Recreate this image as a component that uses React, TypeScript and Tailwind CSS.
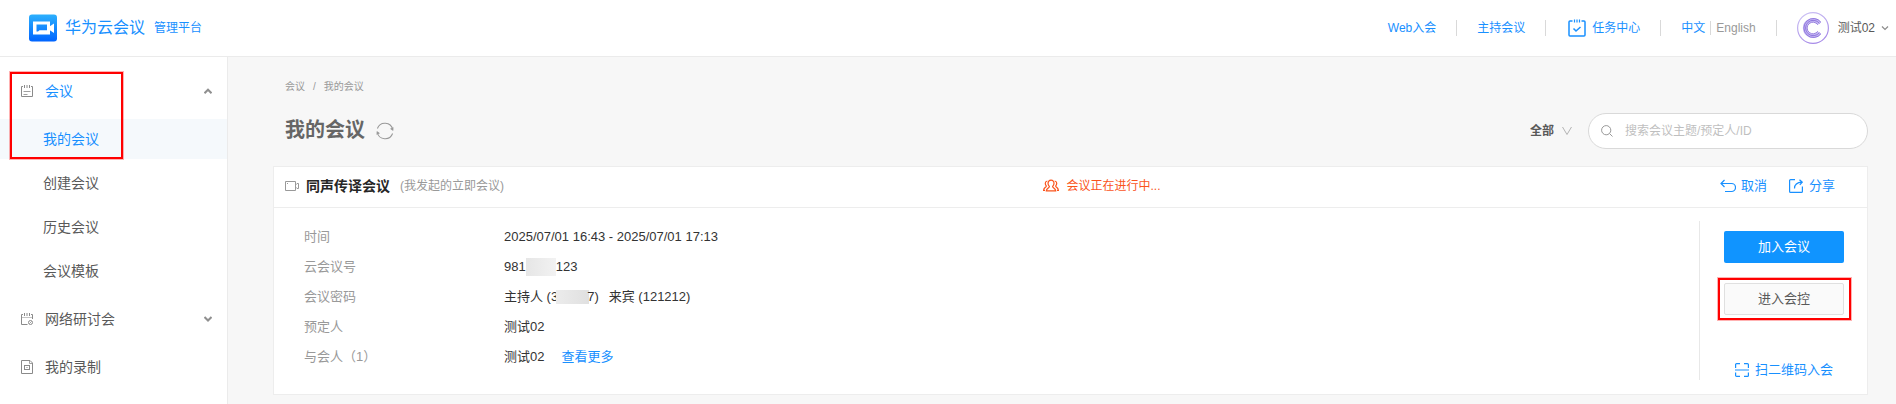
import { useState } from "react";
import type { ReactNode } from "react";

const subItems = ["我的会议", "创建会议", "历史会议", "会议模板"];

function Divider() {
  return <span className="mx-5 h-4 w-px bg-[#d9d9d9]" />;
}

function Chevron({ up = false }: { up?: boolean }) {
  return (
    <svg className="h-2 w-2 shrink-0" viewBox="0 0 8 8" fill="none" stroke="#8f8f8f" strokeWidth="2">
      <path d={up ? "M0.5 6.2 4 2.7 7.5 6.2" : "M0.5 2 4 5.5 7.5 2"} />
    </svg>
  );
}

function LogoIcon() {
  return (
    <svg className="h-7 w-7" viewBox="0 0 28 28">
      <defs>
        <linearGradient id="logo" x1="0" y1="0" x2="0" y2="1">
          <stop offset="0" stopColor="#2cb0fd" />
          <stop offset="1" stopColor="#0064ff" />
        </linearGradient>
      </defs>
      <rect y="0.5" width="28" height="27" rx="3" fill="url(#logo)" />
      <path d="M4 7.500h17v13H4zM7.500 10.500v7h1.500l1.500-1.200h7.500v-5.800z" fill="#fff" fillRule="evenodd" />
      <path d="M20.500 12.500 25 9.500v9.500l-4.500-3z" fill="#fff" />
    </svg>
  );
}

function CalendarIcon() {
  return (
    <svg className="h-3 w-3 shrink-0" viewBox="0 0 12 12" fill="none" stroke="#8a8a8a">
      <path d="M2 1.500H.5v10h11v-10H10M3.500 0v3M6 0v3M8.500 0v3" />
      <path d="M2.500 6.500h7M2.500 9.500h4" stroke="#a0a0a0" />
    </svg>
  );
}

function WebinarIcon() {
  return (
    <svg className="h-3 w-3 shrink-0" viewBox="0 0 12 12" fill="none" stroke="#8a8a8a">
      <path d="M6.500 11.500h-6v-10H2M10 1.500h1.500V6M3.500 0v3M6 0v3M8.500 0v3" />
      <path d="M1 4.500h10" stroke="#c4c4c4" />
      <circle cx="9.500" cy="9.500" r="2" />
      <path d="m8.500 10.500 2-2" strokeWidth="0.8" />
    </svg>
  );
}

function RecordIcon() {
  return (
    <svg className="h-3.5 w-3 shrink-0" viewBox="0 0 12 14" fill="none" stroke="#8a8a8a">
      <path d="M.5.5H9L11.500 3v10.500H.5z" />
      <path d="M8.500.5v3h3" strokeWidth="0.8" />
      <rect x="3.500" y="5.500" width="5" height="4" />
      <path d="M5.500 7.500h1" />
    </svg>
  );
}

function TaskIcon() {
  return (
    <svg className="h-[18px] w-[18px]" viewBox="0 0 18 18" fill="none" stroke="#1890ff" strokeWidth="1.500">
      <path d="M4.500 2H2a1 1 0 0 0-1 1v13a1 1 0 0 0 1 1h14a1 1 0 0 0 1-1V3a1 1 0 0 0-1-1h-2.500" />
      <path d="M6.500.5v3M9 .5v3M11.500.5v3" strokeWidth="1.200" />
      <path d="m5.500 9.500 2.500 2.500 4.500-4" />
    </svg>
  );
}

function Avatar() {
  return (
    <svg className="h-8 w-8" viewBox="0 0 32 32" fill="none">
      <defs>
        <linearGradient id="ring" x1="0" y1="0" x2="0.5" y2="1">
          <stop offset="0" stopColor="#cfc6f5" />
          <stop offset="1" stopColor="#a78be8" />
        </linearGradient>
      </defs>
      <circle cx="16" cy="16" r="15.400" stroke="url(#ring)" strokeWidth="1.200" />
      <path d="M22.500 11.500a8 8 0 1 0 0 9" stroke="#c5b8f3" strokeWidth="4" />
      <path d="M24 10.300a9.500 9.500 0 1 0 0 11.400M22.500 11.500a7.700 7.700 0 1 0 0 9M20.800 12.800a5.800 5.800 0 1 0 0 6.400" stroke="#8468d8" strokeWidth="0.800" />
    </svg>
  );
}

function RefreshIcon() {
  return (
    <svg className="h-[18px] w-[18px]" viewBox="0 0 18 18" fill="none" stroke="#999">
      <path d="M1.400 6.500a8 8 0 0 1 15.300 1M16.600 11.500a8 8 0 0 1-15.300-1" strokeWidth="1.100" />
      <path d="m14 6.800 3.200 2.200.3-3.800zM4 11.200.8 9l-.3 3.800z" fill="#999" stroke="none" />
    </svg>
  );
}

function CameraIcon() {
  return (
    <svg className="h-3 w-3.5 shrink-0" viewBox="0 0 14 12" fill="none" stroke="#999">
      <path d="M.5 1.500h10v9H.5zM10.500 5l1.500-1.500h1.500v5H12L10.500 7M2 3.500h1" />
    </svg>
  );
}

function PeopleIcon() {
  return (
    <svg className="h-3.5 w-4" viewBox="0 0 16 14" fill="none" stroke="#fa541c" strokeWidth="1.200">
      <path d="M8 1.200c-2 0-3 1.300-3 3.100 0 1.500.6 2.500 1.400 3.200 0 1.500-2.900 1.500-3.100 4.300h9.400c-.2-2.800-3.100-2.800-3.100-4.300.8-.7 1.400-1.700 1.400-3.200 0-1.800-1-3.100-3-3.100z" />
      <path d="M4.300 2C2.900 2.200 2.200 3.300 2.300 4.600c0 1 .4 1.700 1 2.300C3.300 8.300.8 8.400.6 11.300H2M11.700 2c1.400.2 2.100 1.300 2 2.600 0 1-.4 1.700-1 2.300 0 1.400 2.500 1.500 2.700 4.400H14" />
    </svg>
  );
}

function UndoIcon() {
  return (
    <svg className="h-3.5 w-4" viewBox="0 0 16 14" fill="none" stroke="#1890ff" strokeWidth="1.200">
      <path d="M4.500 1 1 4.500 4.500 8M1 4.500h10.500a3.700 3.700 0 0 1 0 8H5" />
    </svg>
  );
}

function ShareIcon() {
  return (
    <svg className="h-3.5 w-3.5" viewBox="0 0 14 14" fill="none" stroke="#1890ff" strokeWidth="1.200">
      <path d="M6 .6H1.600a1 1 0 0 0-1 1v10.800a1 1 0 0 0 1 1h10.800a1 1 0 0 0 1-1V7.500" />
      <path d="M5.500 9.500C5.500 6 8 3.500 13 3.200M10.500.8 13.200 3.200l-2.400 2.600" />
    </svg>
  );
}

function ScanIcon() {
  return (
    <svg className="h-3.5 w-3.5" viewBox="0 0 14 14" fill="none" stroke="#1890ff" strokeWidth="1.200">
      <path d="M5 .6H1.600a1 1 0 0 0-1 1V5M9 .6h3.400a1 1 0 0 1 1 1V5M5 13.400H1.600a1 1 0 0 1-1-1V9.500M9 13.400h3.400a1 1 0 0 0 1-1V9.500M0 7h14" />
    </svg>
  );
}

function DetailRow({ label, children }: { label: string; children: ReactNode }) {
  return (
    <div className="flex h-[30px] items-center">
      <dt className="w-[200px] shrink-0 text-[#999]">{label}</dt>
      <dd className="flex items-center whitespace-pre text-[#333]">{children}</dd>
    </div>
  );
}

function Header() {
  return (
    <header className="flex h-[57px] items-center border-b border-[#ebebeb] bg-white pr-[7px] pl-[29px] text-xs text-[#1890ff]">
      <LogoIcon />
      <span className="ml-2 text-base leading-6">华为云会议</span>
      <span className="ml-[9px]">管理平台</span>
      <nav className="ml-auto flex items-center whitespace-nowrap">
        <a href="#web">Web入会</a>
        <Divider />
        <a href="#host">主持会议</a>
        <Divider />
        <a href="#tasks" className="ml-0.5 flex items-center gap-1.5">
          <TaskIcon />
          任务中心
        </a>
        <Divider />
        <button type="button">中文</button>
        <span className="mx-[5px] h-3.5 w-px bg-[#d9d9d9]" />
        <button type="button" className="text-[#999]">
          English
        </button>
        <Divider />
        <button type="button" className="flex items-center text-[#595959]">
          <Avatar />
          <span className="mr-1.5 ml-[9px]">测试02</span>
          <svg className="h-2 w-2" viewBox="0 0 8 8" fill="none" stroke="#8c8c8c" strokeWidth="1.200">
            <path d="m1 2.500 3 3 3-3" />
          </svg>
        </button>
      </nav>
    </header>
  );
}

function Sidebar() {
  const [active, setActive] = useState(subItems[0]);

  return (
    <aside className="relative w-[228px] shrink-0 border-r border-[#ebebeb] bg-white pt-2.5 text-sm text-[#595959]">
      <button type="button" className="flex h-12 w-full items-center gap-3 pr-[15px] pl-[21px] text-[#1890ff]">
        <CalendarIcon />
        <span className="flex-1 text-left">会议</span>
        <Chevron up />
      </button>
      <ul className="flex flex-col gap-1 py-1">
        {subItems.map((item) => (
          <li key={item}>
            <button
              type="button"
              onClick={() => setActive(item)}
              className={`h-10 w-full pl-[43px] text-left ${item === active ? "bg-[#f5f9fc] text-[#1890ff]" : ""}`}
            >
              {item}
            </button>
          </li>
        ))}
      </ul>
      <button type="button" className="flex h-12 w-full items-center gap-3 pr-[15px] pl-[21px]">
        <WebinarIcon />
        <span className="flex-1 text-left">网络研讨会</span>
        <Chevron />
      </button>
      <button type="button" className="flex h-12 w-full items-center gap-3 pr-[15px] pl-[21px]">
        <RecordIcon />
        <span className="flex-1 text-left">我的录制</span>
      </button>
      <div className="pointer-events-none absolute top-[15px] left-2.5 h-[87px] w-[113px] border-2 border-[#ff0000] ring-1 ring-[#ff0000]/30" />
    </aside>
  );
}

function MeetingCard() {
  return (
    <section className="mt-[17px] border border-[#ededed] bg-white">
      <div className="flex h-[41px] items-center border-b border-[#ededed] pr-8 pb-0.5 pl-[11px]">
        <div className="flex w-[49%] items-center">
          <CameraIcon />
          <h2 className="ml-[7px] text-sm font-bold text-[#262626]">同声传译会议</h2>
          <span className="ml-2.5 text-xs text-[#999]">(我发起的立即会议)</span>
        </div>
        <div className="-ml-0.5 flex items-center gap-2 text-xs text-[#fa541c]">
          <PeopleIcon />
          会议正在进行中...
        </div>
        <div className="ml-auto flex items-center gap-[22px] text-[13px] text-[#1890ff]">
          <button type="button" className="flex items-center gap-[5px]">
            <UndoIcon />
            取消
          </button>
          <button type="button" className="flex items-center gap-1.5">
            <ShareIcon />
            分享
          </button>
        </div>
      </div>
      <div className="flex pt-[13px] pb-3.5 text-[13px]">
        <dl className="flex-1 pt-px pl-[30px]">
          <DetailRow label="时间">2025/07/01 16:43 - 2025/07/01 17:13</DetailRow>
          <DetailRow label="云会议号">
            981
            <span className="h-[18px] w-[30px] bg-linear-to-r from-[#e6e6e6] to-[#f2f2f2]" />
            123
          </DetailRow>
          <DetailRow label="会议密码">
            主持人 (3
            <span className="-mx-0.5 h-3.5 w-[33px] bg-linear-to-r from-[#ececec] to-[#e0e0e0]" />
            7)
            <span className="ml-2.5">来宾 (121212)</span>
          </DetailRow>
          <DetailRow label="预定人">测试02</DetailRow>
          <DetailRow label="与会人（1）">
            测试02
            <a href="#more" className="ml-[17px] text-[#1890ff]">
              查看更多
            </a>
          </DetailRow>
        </dl>
        <div className="flex flex-col items-center border-l border-[#e8e8e8] pt-2.5 pr-[23px] pl-6">
          <button type="button" className="h-8 w-[120px] rounded-xs bg-[#1094ff] text-white">
            加入会议
          </button>
          <div className="relative mt-5">
            <button type="button" className="h-8 w-[120px] rounded-xs border border-[#e0e0e0] bg-[#fafafa] text-[#595959]">
              进入会控
            </button>
            <div className="pointer-events-none absolute -inset-y-[5px] -right-[7px] -left-1.5 border-2 border-[#ff0000] ring-1 ring-[#ff0000]/30" />
          </div>
          <a href="#qrcode" className="mt-[45px] flex items-center gap-1.5 leading-5 text-[#1890ff]">
            <ScanIcon />
            扫二维码入会
          </a>
        </div>
      </div>
    </section>
  );
}

export default function App() {
  const [keyword, setKeyword] = useState("");

  return (
    <div className="flex min-h-screen flex-col bg-[#f7f7f7] font-['Liberation_Sans','Noto_Sans_CJK_SC',sans-serif]">
      <Header />
      <div className="flex flex-1">
        <Sidebar />
        <main className="min-w-0 flex-1 pt-5 pr-7 pl-[45px]">
          <nav className="flex gap-2 pl-3 text-[10px] leading-5 text-[#999]">
            <a href="#meeting">会议</a>
            <span>/</span>
            <a href="#my-meeting">我的会议</a>
          </nav>
          <div className="mt-4 flex items-start pl-3">
            <h1 className="pt-[3px] text-xl leading-7 font-bold text-[#666]">我的会议</h1>
            <button type="button" aria-label="刷新" className="mt-[9px] ml-[11px]">
              <RefreshIcon />
            </button>
            <div className="relative ml-auto flex h-9 items-center">
              <select aria-label="会议类型" className="w-[42px] appearance-none bg-transparent text-xs font-bold text-[#595959]">
                <option>全部</option>
              </select>
              <svg
                className="pointer-events-none absolute right-0 h-2.5 w-2.5"
                viewBox="0 0 10 10"
                fill="none"
                stroke="#b3b3b3"
              >
                <path d="m.5 1 4.500 7.500L9.500 1" />
              </svg>
            </div>
            <label className="ml-4 flex h-9 w-[280px] items-center gap-3 rounded-full border border-[#d9d9d9] bg-white px-3">
              <svg className="h-3 w-3 shrink-0" viewBox="0 0 12 12" fill="none" stroke="#999">
                <circle cx="5.200" cy="5.200" r="4.600" />
                <path d="m8.500 8.500 3 3" />
              </svg>
              <input
                type="text"
                aria-label="搜索"
                value={keyword}
                onChange={(e) => setKeyword(e.target.value)}
                placeholder="搜索会议主题/预定人/ID"
                className="min-w-0 flex-1 text-xs text-[#595959] outline-none placeholder:text-[#bfbfbf]"
              />
            </label>
          </div>
          <MeetingCard />
        </main>
      </div>
    </div>
  );
}
